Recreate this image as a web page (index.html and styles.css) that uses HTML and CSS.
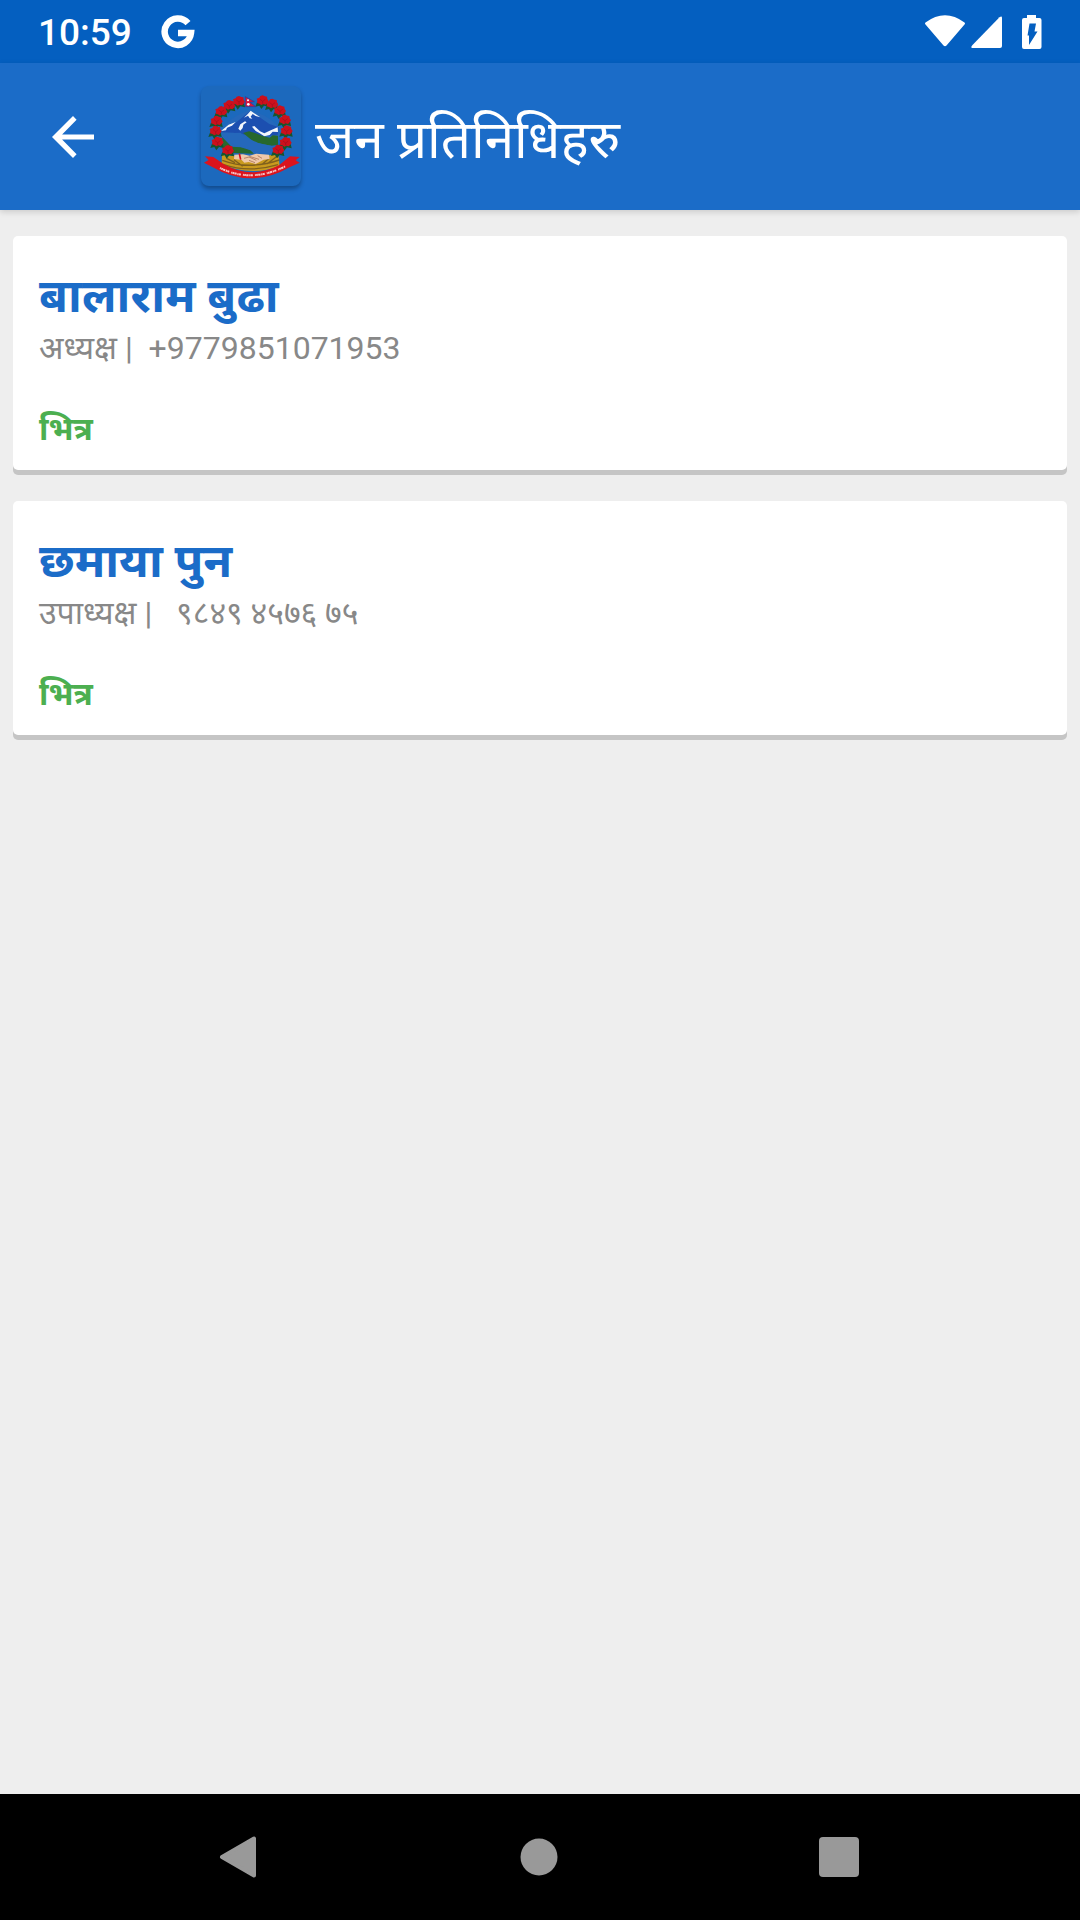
FILE: index.html
```html
<!DOCTYPE html>
<html lang="hi">
<head>
    <meta charset="UTF-8">
    <meta name="viewport" content="width=device-width, initial-scale=1.0">
    <title>जन प्रतिनिधिहरु</title>
    <link rel="stylesheet" href="styles.css">
</head>
<body>
<div class="status-bar">
    <span class="clock">10:59</span>
    <svg class="google-icon" viewBox="0 0 34 34" aria-hidden="true">
        <path d="M27 8.200A13.200 13.200 0 1 0 30 18H17" fill="none" stroke="#fff" stroke-width="6.500"/>
    </svg>
    <div class="status-icons">
        <svg class="wifi-icon" viewBox="0 0 42 34" aria-hidden="true">
            <path d="M1.500 7.500Q21-7 40.500 7.500Q41.500 8.500 40.500 9.500L22.500 30.500Q21 32 19.500 30.500L1.500 9.500Q.5 8.500 1.500 7.500Z" fill="#fff"/>
        </svg>
        <svg class="signal-icon" viewBox="0 0 32 34" aria-hidden="true">
            <path d="M1.500 30L28.500 2.300Q31 .5 31 3V31Q31 33 29 33H1.500Q-1 33 1.500 30Z" fill="#fff"/>
        </svg>
        <svg class="battery-icon" viewBox="0 0 20 34" aria-hidden="true">
            <path d="M5 3V0H14V3H17.500Q19.500 3 19.500 5V32Q19.500 34 17.500 34H2Q0 34 0 32V5Q0 3 2 3Z" fill="#fff"/>
            <path d="M7.500 8.500H14L12.500 16.500H15.500L7 30V20.500H5.500Z" fill="#045fc0"/>
        </svg>
    </div>
</div>

<header class="app-bar">
    <button class="back" type="button" aria-label="Back">
        <svg viewBox="0 0 42 42" aria-hidden="true">
            <path d="M42 18.500V23.500H10.100L24.600 38.300L21 42L0 21L21 0L24.600 3.700L10.100 18.500Z" fill="#fff"/>
        </svg>
    </button>
    <svg class="emblem" viewBox="33 29 300 300" aria-hidden="true">
        <defs>
            <g id="flower">
                <path d="M-17 5L-22 18L-10 15L-4 25L4 15L18 18L15 4Z" fill="#17552c"/>
                <path d="M0-16L7-13L13-12L14-5L18 1L14 7L9 12L2 10L-4 13L-10 9L-17 7L-16 0L-18-6L-10-9L-7-14Z" fill="#cc101c"/>
                <path d="M-8-4L0 2L8-4M0 2V9" fill="none" stroke="#a00c1c" stroke-width="2"/>
            </g>
        </defs>
        <path d="M94 185C93 145 138 111 180 103C222 112 270 139 270 174L246 230L214 236L100 232Z" fill="#2568bb"/>
        <path d="M94 168L120 149L139 138L181 103L211 124L238 143L267 153L263 176L230 179L176 177L130 169Z" fill="#1c4fb0"/>
        <path d="M174 112L182 103L202 117L211 123L197 119L188 113L182 121L187 127L179 126L174 118L162 124ZM93 164L116 145L137 137L126 148L111 154L108 162ZM145 157L151 144L165 135L170 138L160 145L158 155L151 163ZM186 151L193 149L210 165L223 171L239 163L263 153L264 167L248 166L239 176L223 180L208 170L197 164Z" fill="#f2f6fc"/>
        <path d="M159 170L177 165L197 171L216 178L239 184L248 177L264 178L264 205L245 208L218 204L193 198L181 188Z" fill="#27682d"/>
        <path d="M96 181Q115 201 125 211L153 213L181 222L192 232L132 230L100 222Z" fill="#27682d"/>
        <path d="M107 171L151 169L176 187L205 200L249 210L238 231L200 230L170 216L140 210L122 200Z" fill="#2568bb"/>
        <path d="M96 235Q183 247 265 233L269 269Q181 302 95 264Z" fill="#c99a1e"/>
        <path d="M97 252Q178 282 268 251M99 264Q178 291 264 265M110 246L135 259M132 250L158 270M215 265L238 245M232 262L259 241" fill="none" stroke="#80601d" stroke-width="4"/>
        <path d="M133 235L159 234L179 238L199 232L237 235L239 248L221 250L197 263L176 257L163 259L155 251L132 248Z" fill="#efc8aa"/>
        <path d="M162 246L177 242L199 252M178 240L207 249M177 252L195 259M203 238L216 246" fill="none" stroke="#9b6046" stroke-width="2"/>
        <path d="M148 232L152 250" stroke="#d4101c" stroke-width="5"/>
        <path d="M45 240L70 242L102 264Q183 310 267 267L300 240L329 242L317 252L329 259L300 272Q183 340 67 272L42 259L56 251Z" fill="#db141d"/>
        <path d="M90 275Q185 321 286 270" fill="none" stroke="#f3c5c7" stroke-width="6" stroke-dasharray="3 1 5 1 7 2 4 1 6 6"/>
        <use href="#flower" x="147" y="75"/>
        <use href="#flower" x="118" y="87"/>
        <use href="#flower" x="94" y="105"/>
        <use href="#flower" x="80" y="134"/>
        <use href="#flower" x="77" y="164"/>
        <use href="#flower" x="83" y="197"/>
        <use href="#flower" x="114" y="222"/>
        <use href="#flower" x="218" y="73"/>
        <use href="#flower" x="247" y="83"/>
        <use href="#flower" x="270" y="103"/>
        <use href="#flower" x="285" y="131"/>
        <use href="#flower" x="290" y="163"/>
        <use href="#flower" x="287" y="198"/>
        <use href="#flower" x="265" y="221"/>
        <path d="M166 61L193 76L180 78L197 91H166Z" fill="#d4163d" stroke="#273c9b" stroke-width="2"/>
        <circle cx="174" cy="72" r="3" fill="#fff"/>
        <circle cx="175" cy="84" r="4" fill="#fff"/>
    </svg>
    <h1 class="title">जन प्रतिनिधिहरु</h1>
</header>

<main class="people">
    <article class="card">
        <h2 class="name">बालाराम बुढा</h2>
        <p class="meta">अध्यक्ष |  +9779851071953</p>
        <p class="presence">भित्र</p>
    </article>
    <article class="card">
        <h2 class="name">छमाया पुन</h2>
        <p class="meta">उपाध्यक्ष |   ९८४९ ४५७६ ७५</p>
        <p class="presence">भित्र</p>
    </article>
</main>

<nav class="nav-bar">
    <button type="button" aria-label="Back">
        <svg viewBox="0 0 42 42" aria-hidden="true">
            <path d="M36 2.500V39.500L4 21Z" fill="#999" stroke="#999" stroke-width="4" stroke-linejoin="round"/>
        </svg>
    </button>
    <button type="button" aria-label="Home">
        <svg viewBox="0 0 42 42" aria-hidden="true">
            <circle cx="21" cy="21" r="18.500" fill="#999"/>
        </svg>
    </button>
    <button type="button" aria-label="Recent apps">
        <svg viewBox="0 0 42 42" aria-hidden="true">
            <rect x="1" y="1" width="40" height="40" rx="4" fill="#999"/>
        </svg>
    </button>
</nav>
</body>
</html>
```

FILE: styles.css
```css
* {
    box-sizing: border-box;
}

body {
    font-family: Roboto, "Noto Sans", "Noto Sans Devanagari", sans-serif;
    margin: 0;
    min-height: 100vh;
    display: flex;
    flex-direction: column;
    background-color: #eee;
}

h1, h2, p {
    margin: 0;
}

button {
    background: none;
    border: none;
    padding: 0;
    cursor: pointer;
}

svg {
    display: block;
}

.status-bar {
    display: flex;
    align-items: center;
    height: 63px;
    padding: 0 38px;
    background: #045fc0;
    color: white;
}

.clock {
    padding-top: 2px;
    font-size: 37px;
    font-weight: 500;
}

.google-icon {
    width: 34px;
    height: 34px;
    margin-left: 29px;
}

.status-icons {
    display: flex;
    align-items: center;
    margin-left: auto;
}

.wifi-icon {
    width: 42px;
    height: 34px;
}

.signal-icon {
    width: 32px;
    height: 34px;
    margin-left: 5px;
}

.battery-icon {
    width: 20px;
    height: 34px;
    margin-left: 19px;
}

.app-bar {
    display: flex;
    align-items: center;
    height: 147px;
    padding: 0 42px;
    background: #1b6cc8;
    box-shadow: 0 2px 6px rgba(0, 0, 0, 0.15);
    color: white;
}

.back {
    padding: 10px;
}

.back svg {
    width: 42px;
    height: 42px;
}

.emblem {
    width: 100px;
    height: 100px;
    margin-left: 97px;
    margin-bottom: 2px;
    border-radius: 8px;
    background: #1c69bd;
    box-shadow: 0 3px 4px rgba(0, 0, 0, 0.3);
}

.title {
    margin-left: 14px;
    padding-top: 6px;
    font-size: 53px;
    font-weight: normal;
    line-height: 70px;
}

.people {
    flex: 1;
    display: flex;
    flex-direction: column;
    gap: 31px;
    padding: 26px 13px;
}

.card {
    padding: 28px 26px 20px;
    background: white;
    border-radius: 5px;
    box-shadow: 0 5px 0 #c5c5c5;
}

.name {
    color: #1b6cc8;
    font-size: 47px;
    font-weight: bold;
    line-height: 64px;
}

.meta {
    color: #888;
    font-size: 32px;
    line-height: 40px;
    white-space: pre-wrap;
}

.presence {
    margin-top: 40px;
    color: #4caf50;
    font-size: 32px;
    font-weight: bold;
    line-height: 42px;
}

.nav-bar {
    display: grid;
    grid-template-columns: repeat(3, 1fr);
    height: 126px;
    padding: 0 91px 0 89px;
    background: black;
}

.nav-bar button {
    display: flex;
    align-items: center;
    justify-content: center;
}

.nav-bar svg {
    width: 42px;
    height: 42px;
}
```
